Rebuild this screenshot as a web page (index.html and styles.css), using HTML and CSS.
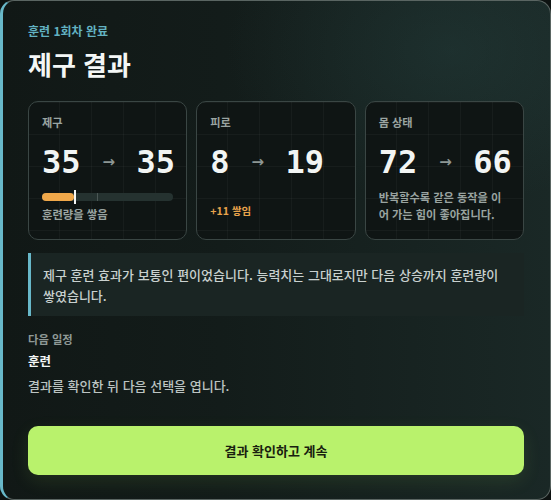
FILE: index.html
```html
<!DOCTYPE html>
<html lang="ko">
<head>
<meta charset="utf-8">
<link rel="stylesheet" href="styles.css">
</head>
<body>
<div class="panel">
  <div class="eyebrow">훈련 1회차 완료</div>
  <h1 class="title">제구 결과</h1>
  <div class="cards">
    <div class="card">
      <div class="card-label">제구</div>
      <div class="nums"><span class="num">35</span><span class="arrow">→</span><span class="num">35</span></div>
      <div class="bar"><div class="bar-fill" style="width:32px"></div><div class="bar-mark" style="left:32px"></div><div class="bar-tick" style="left:55px"></div></div>
      <div class="card-note">훈련량을 쌓음</div>
    </div>
    <div class="card">
      <div class="card-label">피로</div>
      <div class="nums"><span class="num">8</span><span class="arrow">→</span><span class="num">19</span></div>
      <div class="card-delta">+11 쌓임</div>
    </div>
    <div class="card">
      <div class="card-label">몸 상태</div>
      <div class="nums"><span class="num">72</span><span class="arrow">→</span><span class="num">66</span></div>
      <div class="card-desc">반복할수록 같은 동작을 이어 가는 힘이 좋아집니다.</div>
    </div>
  </div>
  <div class="message">제구 훈련 효과가 보통인 편이었습니다. 능력치는 그대로지만 다음 상승까지 훈련량이 쌓였습니다.</div>
  <div class="next">
    <div class="next-label">다음 일정</div>
    <div class="next-title">훈련</div>
    <div class="next-desc">결과를 확인한 뒤 다음 선택을 엽니다.</div>
  </div>
  <button class="cta">결과 확인하고 계속</button>
</div>
</body>
</html>
```

FILE: styles.css
```css
* { box-sizing: border-box; }
html, body { margin: 0; padding: 0; background: #0d1211; }
body {
  font-family: "Noto Sans CJK KR", "Noto Sans", sans-serif;
  width: 551px;
  height: 500px;
}
.panel {
  width: 551px;
  height: 500px;
  border: 1px solid #5a6562;
  border-left: 3px solid #68b8c9;
  border-radius: 14px;
  padding: 22px 26px 0 25px;
  background:
    radial-gradient(ellipse 320px 220px at 82% 10%, rgba(40,70,68,0.35), rgba(40,70,68,0) 70%),
    linear-gradient(90deg, #111816 0%, #131c1a 40%, #1a2826 100%);
  display: flex;
  flex-direction: column;
}
.eyebrow {
  color: #62b2c2;
  font-size: 12px;
  font-weight: 700;
  line-height: 16px;
}
.title {
  margin: 8px 0 0;
  color: #f4f7f6;
  font-size: 26px;
  font-weight: 700;
  line-height: 34px;
}
.cards {
  margin-top: 20px;
  display: grid;
  grid-template-columns: minmax(0, 1fr) minmax(0, 1fr) minmax(0, 1fr);
  gap: 9px;
}
.card {
  height: 139px;
  border: 1px solid #3a4644;
  border-radius: 10px;
  padding: 12px 13px 0;
  background-color: #0f1514;
  background-image:
    linear-gradient(rgba(255,255,255,0.035) 1px, transparent 1px),
    linear-gradient(90deg, rgba(255,255,255,0.035) 1px, transparent 1px);
  background-size: 32px 32px;
  background-position: -2px 0px;
  display: flex;
  flex-direction: column;
}
.card-label {
  color: #9aa4a1;
  font-size: 11.2px;
  font-weight: 700;
  line-height: 16px;
}
.nums {
  margin-top: 13px;
  display: flex;
  align-items: center;
  gap: 22px;
  height: 38px;
}
.num {
  font-family: "DejaVu Sans Mono", monospace;
  font-weight: 700;
  font-size: 32px;
  line-height: 38px;
  color: #f2f5f4;
}
.arrow {
  color: #8d9794;
  font-size: 15px;
  font-weight: 700;
  width: 12px;
  font-family: "DejaVu Sans", sans-serif;
  text-align: center;
}
.bar {
  position: relative;
  margin-top: 12px;
  height: 8px;
  border-radius: 4px;
  background: #253230;
}
.bar-fill {
  height: 8px;
  border-radius: 4px;
  background: #f0a84a;
}
.bar-mark {
  position: absolute;
  top: -3px;
  width: 2px;
  height: 14px;
  background: #f4f6f5;
}
.bar-tick {
  position: absolute;
  top: 0;
  width: 1px;
  height: 8px;
  background: #4b5755;
}
.card-note {
  margin-top: 5px;
  color: #9aa4a1;
  font-size: 11.3px;
  font-weight: 700;
  line-height: 16px;
}
.card-delta {
  margin-top: 22px;
  color: #e8a44c;
  font-size: 10.5px;
  font-weight: 700;
  line-height: 16px;
}
.card-desc {
  margin-top: 8px;
  color: #9aa4a1;
  font-size: 11.2px;
  font-weight: 700;
  line-height: 17px;
}
.message {
  margin-top: 13px;
  border-left: 3px solid #68b8c9;
  background: #1a2523;
  padding: 11px 14px 10px 12px;
  color: #c9d1cf;
  font-size: 13px;
  font-weight: 500;
  line-height: 21px;
}
.next { margin-top: 14px; }
.next-label {
  color: #8f9996;
  font-size: 11.3px;
  font-weight: 700;
  line-height: 18px;
}
.next-title {
  margin-top: 4px;
  color: #f4f7f6;
  font-size: 12.5px;
  font-weight: 700;
  line-height: 18px;
}
.next-desc {
  margin-top: 7px;
  color: #bcc4c2;
  font-size: 13px;
  font-weight: 500;
  line-height: 18px;
}
.cta {
  margin-top: 31px;
  height: 49px;
  border: 0;
  border-radius: 10px;
  background: #b9f26c;
  color: #18200f;
  font-family: "Noto Sans CJK KR", "Noto Sans", sans-serif;
  font-size: 13px;
  font-weight: 700;
  box-shadow: 0 6px 18px rgba(150, 210, 80, 0.12);
}
```
